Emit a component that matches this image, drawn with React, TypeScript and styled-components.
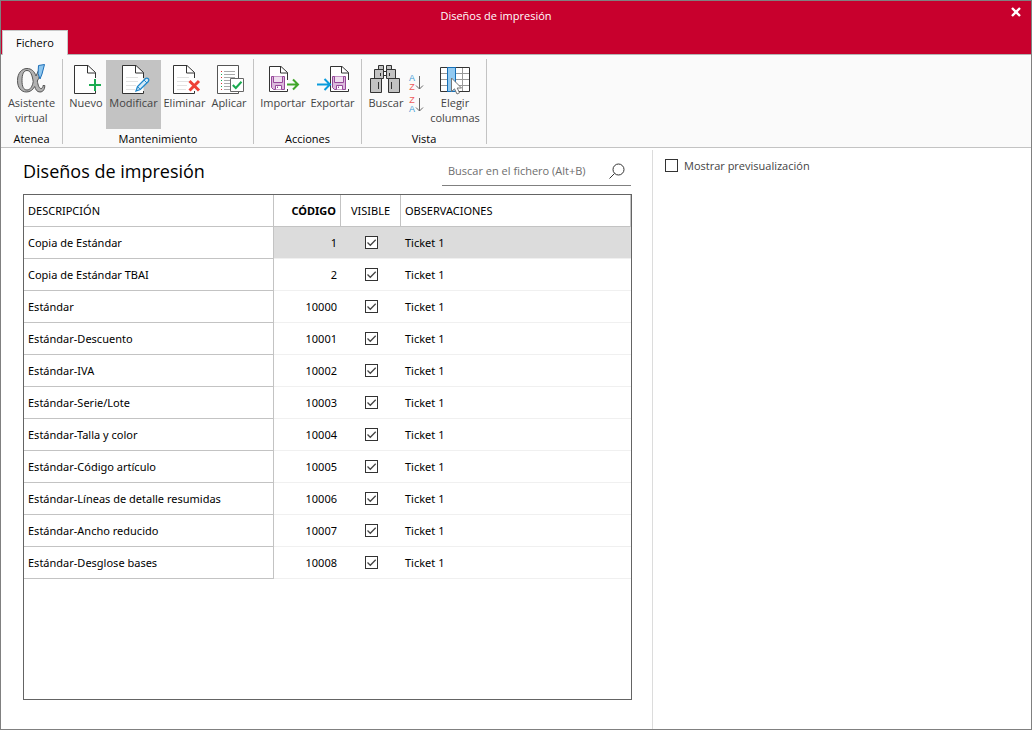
import React from "react";
import styled, { createGlobalStyle } from "styled-components";

const GlobalStyle = createGlobalStyle`
  *, *::before, *::after { box-sizing: border-box; }
  body {
    margin: 0;
    background: #fff;
    color: #000;
    font-family: "Open Sans", "Noto Sans", sans-serif;
    font-size: 11px;
    line-height: 15px;
  }
  button, input { font: inherit; color: inherit; }
`;

const Window = styled.div`
  display: flex;
  flex-direction: column;
  min-height: 100vh;
  border: 1px solid #808080;
`;

const TitleBar = styled.header`
  display: grid;
  grid-template-columns: 1fr 40px;
  grid-template-rows: 29px 24px;
  background: #c8002d;
  border-bottom: 1px solid #b4b4b4;
`;

const WindowTitle = styled.div`
  align-self: center;
  text-align: center;
  color: #fff;
`;

const CloseButton = styled.button`
  display: flex;
  align-items: flex-start;
  justify-content: center;
  padding: 6px 0 0 10px;
  border: 0;
  background: none;
`;

const Tabs = styled.nav`
  display: flex;
  grid-column: 1 / -1;
  margin-bottom: -1px;
  padding-left: 1px;
`;

const Tab = styled.button`
  width: 66px;
  padding: 0 0 1px;
  border: 1px solid #c8c8c8;
  border-bottom: 0;
  background: #fafafa;
`;

const Ribbon = styled.div`
  display: flex;
  padding: 4px 0 3px;
  background: #fafafa;
  border-bottom: 1px solid #c3c3c3;
`;

const Group = styled.section<{ $inset: number }>`
  display: flex;
  flex-direction: column;
  padding: 1px ${(p) => p.$inset}px 0;
  border-right: 1px solid #c3c3c3;
`;

const GroupItems = styled.div`
  display: flex;
  height: 69px;
`;

const GroupName = styled.div`
  padding-top: 4px;
  line-height: 11px;
  text-align: center;
`;

const RibbonButton = styled.button<{ $width: number; $active?: boolean }>`
  display: flex;
  flex-direction: column;
  align-items: center;
  width: ${(p) => p.$width}px;
  padding: 4px 0 0;
  border: 0;
  background: ${(p) => (p.$active ? "#c3c3c3" : "transparent")};
  color: #444;
  line-height: 15px;
`;

const Icon = styled.svg`
  flex: none;
  display: block;
  fill: none;
  overflow: visible;
`;

const ToolIcon = styled(Icon)`
  margin-bottom: -1px;
`;

const SortColumn = styled.div`
  display: flex;
  flex-direction: column;
  align-items: center;
  gap: 4px;
  width: 20px;
  padding-top: 14px;
`;

const SortButton = styled.button`
  display: flex;
  align-items: center;
  padding: 0;
  border: 0;
  background: none;
`;

const SortLetters = styled.span`
  display: flex;
  flex-direction: column;
  font-family: "Liberation Sans", sans-serif;
  font-size: 9px;
  line-height: 9px;
`;

const Letter = styled.span<{ $color: string }>`
  color: ${(p) => p.$color};
`;

const Body = styled.main`
  flex: 1;
  display: grid;
  grid-template-columns: minmax(0, 651fr) minmax(0, 379fr);
  padding-top: 2px;
`;

const ListPane = styled.section`
  display: flex;
  flex-direction: column;
  padding: 8px 20px 29px 22px;
`;

const PreviewPane = styled.aside`
  padding: 8px 12px;
  border-left: 1px solid #dcdcdc;
`;

const ListHeader = styled.div`
  display: flex;
  justify-content: space-between;
  align-items: flex-start;
  padding-right: 1px;
  margin-bottom: 8px;
`;

const Heading = styled.h1`
  margin: 0;
  font-size: 18px;
  font-weight: 400;
  line-height: 26px;
`;

const Search = styled.div`
  display: flex;
  align-items: center;
  width: 189px;
  height: 28px;
  padding: 0 6px 2px;
  border-bottom: 1px solid #808080;
`;

const SearchInput = styled.input`
  flex: 1;
  min-width: 0;
  padding: 0;
  border: 0;
  outline: 0;
  background: none;
  &::placeholder { color: #6e6e6e; opacity: 1; }
`;

const PlainButton = styled.button`
  padding: 0;
  border: 0;
  background: none;
`;

const GridFrame = styled.div`
  flex: 1;
  border: 1px solid #646464;
`;

const Table = styled.table`
  width: 100%;
  table-layout: fixed;
  border-collapse: separate;
  border-spacing: 0;
  font-family: "Noto Sans", "Open Sans", sans-serif;
`;

const Column = styled.col<{ $width?: number }>`
  width: ${(p) => (p.$width ? p.$width + "px" : "auto")};
`;

type Align = "left" | "center" | "right";

const HeaderCell = styled.th<{ $align?: Align; $bold?: boolean }>`
  height: 32px;
  padding: 0 4px;
  border-right: 1px solid #c3c3c3;
  border-bottom: 1px solid #c3c3c3;
  font-weight: ${(p) => (p.$bold ? 700 : 400)};
  text-align: ${(p) => p.$align ?? "left"};
`;

const Cell = styled.td<{ $align?: Align; $fixed?: boolean; $selected?: boolean }>`
  height: 32px;
  padding: 0 4px;
  border-bottom: 1px solid ${(p) => (p.$fixed ? "#c3c3c3" : "#f0f0f0")};
  border-right: ${(p) => (p.$fixed ? "1px solid #c3c3c3" : "0")};
  background: ${(p) => (p.$selected ? "#dcdcdc" : "#fff")};
  text-align: ${(p) => p.$align ?? "left"};
  white-space: nowrap;
`;

const tick =
  "url(\"data:image/svg+xml,%3Csvg xmlns='http://www.w3.org/2000/svg' viewBox='0 0 11 11'%3E%3Cpath d='M1.5 5.5L4.3 8.3L9.7 2.8' fill='none' stroke='%23444' stroke-width='1.3'/%3E%3C/svg%3E\")";

const CheckBox = styled.input`
  appearance: none;
  display: block;
  flex: none;
  width: 13px;
  height: 13px;
  margin: 0 auto;
  border: 1px solid #333;
  background: #fff;
  &:checked { background-image: ${tick}; }
`;

const PreviewOption = styled.label`
  display: flex;
  align-items: center;
  gap: 6px;
  color: #444;
  ${CheckBox} { margin: 0; }
`;

const PageOutline = () => (
  <>
    <path d="M4.5 1.5H18L25.5 9V29.5H4.5Z" fill="#fff" />
    <path d="M25.5 14V8.5L18 1.5H4.5V29.5H25.5V27" stroke="#333" />
    <path d="M17.5 1.5V9H25.5" stroke="#333" />
  </>
);

const PageLines = () => (
  <path d="M8 13.5H20M8 17.5H20M8 21.5H18M8 25.5H17" stroke="#e2e2e2" />
);

const DiskPage = () => (
  <>
    <path d="M.5 2.5H12L18.5 9V27.5H.5Z" fill="#fff" />
    <path d="M18.5 16V8.5L12 2.5H.5V27.5H18.5V25" stroke="#333" />
    <path d="M11.5 2.5V9H18.5" stroke="#333" />
    <path d="M2.5 12.5H15.5V25.5H4.5L2.5 23.5Z" fill="#dcb9dc" stroke="#96489a" />
    <path d="M4.5 12.5V18.5H13.5V12.5" fill="#f0e0f0" stroke="#96489a" />
    <path d="M6.5 25.5V21.5H12.5V25.5" fill="#fff" stroke="#96489a" />
    <path d="M8.5 22.5V24" stroke="#96489a" />
  </>
);

const icons = {
  assistant: (
    <>
      <path
        fillRule="evenodd"
        d="M11 4.5C15.5 4.5 18.5 7.5 20 12L22.5 6.5H24.5C24.5 10.5 23 14 21.3 17C22 21 23 24.5 25 24.5C26.5 24.5 27 23 27 21.5H28.8C28.8 25.5 27 28 24 28C21 28 19.5 25.5 18.7 22.5C16.8 26 14 28 10.5 28C5 28 1.5 23.5 1.5 16.5C1.5 9.5 5.5 4.5 11 4.5ZM11 6.5C7.5 6.5 6 10.5 6 16.5C6 22.5 7.5 26 11 26C14.5 26 16.5 22 17.2 17.5C16.2 11 14.5 6.5 11 6.5Z"
        fill="#b2b2b2"
        stroke="#555"
      />
      <path d="M22.5 1.5L28.5 .5L26 10L24 15L22 9.5Z" fill="#8ec6ee" stroke="#1d6fb8" />
    </>
  ),
  create: (
    <>
      <PageOutline />
      <path d="M25 15V27M19 21H31" stroke="#1aab50" strokeWidth="2" />
    </>
  ),
  edit: (
    <>
      <PageOutline />
      <PageLines />
      <path d="M18 27L19.5 22.5L27.5 14.5Q29 13.5 30.3 14.8Q31.5 16 30.3 17.5L22.3 25.5Z" fill="#d4eaf8" stroke="#1f87cb" strokeWidth="1.3" />
      <path d="M26 16L29 19M19.5 22.5L22.3 25.5" stroke="#1f87cb" />
    </>
  ),
  remove: (
    <>
      <PageOutline />
      <PageLines />
      <path d="M20.5 17L30 26.5M30 17L20.5 26.5" stroke="#ee4036" strokeWidth="3" />
    </>
  ),
  apply: (
    <>
      <path d="M4.5 1.5H25.5V29.5H4.5Z" fill="#fff" stroke="#555" />
      <path d="M11 7.5H22M11 10.5H22M11 13.5H22M11 16.5H17M11 19.5H17M11 22.5H17M11 25.5H17" stroke="#aaa" />
      <path d="M8 7.5H9M8 13.5H9M8 19.5H9M8 25.5H9" stroke="#d33" />
      <path d="M8 10.5H9M8 16.5H9M8 22.5H9" stroke="#1aab50" />
      <path d="M17.5 14.5H30.5V27.5H17.5Z" fill="#fff" stroke="#666" />
      <path d="M19.8 21L22.8 24L28.5 17.8" stroke="#1aab50" strokeWidth="2" />
    </>
  ),
  importFile: (
    <>
      <g transform="translate(2 0)"><DiskPage /></g>
      <path d="M20 20.5H31M26 15.5L31 20.5L26 25.5" stroke="#41a62a" strokeWidth="2" />
    </>
  ),
  exportFile: (
    <>
      <g transform="translate(13 0)"><DiskPage /></g>
      <path d="M0 20.5H12.5M7.5 15L13 20.5L7.5 26" stroke="#0a9bdc" strokeWidth="2" />
    </>
  ),
  find: (
    <>
      <g fill="#c3c3c3" stroke="#333">
        <path d="M8.5 1.5H13.5V5.5H8.5ZM16.5 1.5H21.5V5.5H16.5Z" />
        <path d="M13.5 7.5H16.5V11.5H13.5Z" fill="#fff" />
        <path d="M4.5 5.5H13.5V14.5H4.5ZM16.5 5.5H25.5V14.5H16.5Z" />
        <path d="M.5 14.5H11.5V28.5H.5ZM18.5 14.5H29.5V28.5H18.5Z" />
      </g>
      <path d="M10.5 9V12M19.5 9V12M8.5 18V25M21.5 18V25" stroke="#333" />
    </>
  ),
  columns: (
    <>
      <path d="M1.5 3.5H30.5V27.5H1.5Z" fill="#fff" />
      <path d="M1.5 9.5H30.5M1.5 15.5H30.5M1.5 21.5H30.5M23.5 3.5V27.5" stroke="#999" />
      <path d="M1.5 3.5H30.5V27.5H1.5Z" stroke="#333" />
      <path d="M8.5 3.5H16.5V27.5H8.5Z" fill="#93caf1" stroke="#1670b8" />
      <path d="M12.5 14V27.5L15.5 24.8L18 30L20.5 28.8L18.2 24H22.5Z" fill="#fff" stroke="#777" />
    </>
  ),
};

type IconName = keyof typeof icons;

const Tool = ({ icon, label, width, active }: { icon: IconName; label: React.ReactNode; width: number; active?: boolean }) => (
  <RibbonButton type="button" $width={width} $active={active}>
    <ToolIcon width="32" height="32" viewBox="0 0 32 32" aria-hidden="true">{icons[icon]}</ToolIcon>
    <span>{label}</span>
  </RibbonButton>
);

const Sort = ({ letters, label }: { letters: "AZ" | "ZA"; label: string }) => (
  <SortButton type="button" aria-label={label}>
    <SortLetters>
      {letters.split("").map((l) => (
        <Letter key={l} $color={l === "A" ? "#3d9bd6" : "#ee5a5a"}>{l}</Letter>
      ))}
    </SortLetters>
    <Icon width="10" height="16" viewBox="0 0 10 16" aria-hidden="true">
      <path d="M4.5 1V14M1 10.5L4.5 14L8 10.5" stroke="#666" />
    </Icon>
  </SortButton>
);

const designs: [string, number][] = [
  ["Copia de Estándar", 1],
  ["Copia de Estándar TBAI", 2],
  ["Estándar", 10000],
  ["Estándar-Descuento", 10001],
  ["Estándar-IVA", 10002],
  ["Estándar-Serie/Lote", 10003],
  ["Estándar-Talla y color", 10004],
  ["Estándar-Código artículo", 10005],
  ["Estándar-Líneas de detalle resumidas", 10006],
  ["Estándar-Ancho reducido", 10007],
  ["Estándar-Desglose bases", 10008],
];

export default function App() {
  return (
    <Window>
      <GlobalStyle />
      <TitleBar>
        <WindowTitle>Diseños de impresión</WindowTitle>
        <CloseButton type="button" aria-label="Cerrar">
          <Icon width="10" height="10" viewBox="0 0 10 10">
            <path d="M1 1L9 9M9 1L1 9" stroke="#fff" strokeWidth="2.4" />
          </Icon>
        </CloseButton>
        <Tabs>
          <Tab type="button">Fichero</Tab>
        </Tabs>
      </TitleBar>

      <Ribbon>
        <Group $inset={0}>
          <GroupItems>
            <Tool icon="assistant" width={61} label={<>Asistente<br />virtual</>} />
          </GroupItems>
          <GroupName>Atenea</GroupName>
        </Group>
        <Group $inset={3}>
          <GroupItems>
            <Tool icon="create" width={40} label="Nuevo" />
            <Tool icon="edit" width={55} label="Modificar" active />
            <Tool icon="remove" width={47} label="Eliminar" />
            <Tool icon="apply" width={42} label="Aplicar" />
          </GroupItems>
          <GroupName>Mantenimiento</GroupName>
        </Group>
        <Group $inset={4}>
          <GroupItems>
            <Tool icon="importFile" width={50} label="Importar" />
            <Tool icon="exportFile" width={49} label="Exportar" />
          </GroupItems>
          <GroupName>Acciones</GroupName>
        </Group>
        <Group $inset={3}>
          <GroupItems>
            <Tool icon="find" width={42} label="Buscar" />
            <SortColumn>
              <Sort letters="AZ" label="Orden ascendente" />
              <Sort letters="ZA" label="Orden descendente" />
            </SortColumn>
            <Tool icon="columns" width={56} label={<>Elegir<br />columnas</>} />
          </GroupItems>
          <GroupName>Vista</GroupName>
        </Group>
      </Ribbon>

      <Body>
        <ListPane>
          <ListHeader>
            <Heading>Diseños de impresión</Heading>
            <Search>
              <SearchInput type="search" aria-label="Buscar en el fichero" placeholder="Buscar en el fichero (Alt+B)" />
              <PlainButton type="button" aria-label="Buscar">
                <Icon width="16" height="16" viewBox="0 0 16 16">
                  <circle cx="9.5" cy="6.5" r="5.5" stroke="#333" />
                  <path d="M5.5 10.5L.5 15.5" stroke="#333" />
                </Icon>
              </PlainButton>
            </Search>
          </ListHeader>
          <GridFrame>
            <Table>
              <colgroup>
                <Column $width={250} />
                <Column $width={67} />
                <Column $width={60} />
                <Column />
              </colgroup>
              <thead>
                <tr>
                  <HeaderCell>DESCRIPCIÓN</HeaderCell>
                  <HeaderCell $align="right" $bold>CÓDIGO</HeaderCell>
                  <HeaderCell $align="center">VISIBLE</HeaderCell>
                  <HeaderCell>OBSERVACIONES</HeaderCell>
                </tr>
              </thead>
              <tbody>
                {designs.map(([name, code], i) => (
                  <tr key={code}>
                    <Cell $fixed>{name}</Cell>
                    <Cell $align="right" $selected={i === 0}>{code}</Cell>
                    <Cell $align="center" $selected={i === 0}>
                      <CheckBox type="checkbox" defaultChecked aria-label={`Visible: ${name}`} />
                    </Cell>
                    <Cell $selected={i === 0}>Ticket 1</Cell>
                  </tr>
                ))}
              </tbody>
            </Table>
          </GridFrame>
        </ListPane>
        <PreviewPane>
          <PreviewOption>
            <CheckBox type="checkbox" />
            Mostrar previsualización
          </PreviewOption>
        </PreviewPane>
      </Body>
    </Window>
  );
}
